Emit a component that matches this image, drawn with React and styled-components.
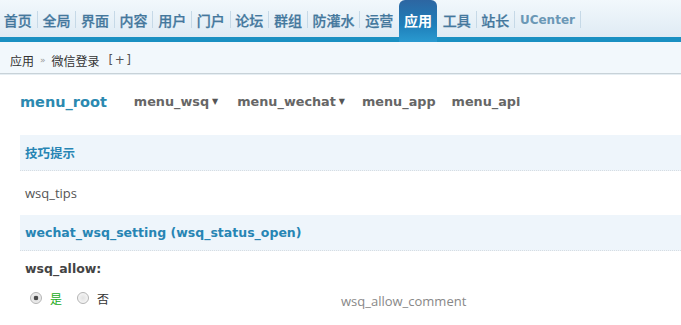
import React from "react";
import styled, { createGlobalStyle } from "styled-components";

const GlobalStyle = createGlobalStyle`
  html, body { margin: 0; padding: 0; background: #fff; }
  body {
    width: 681px;
    overflow: hidden;
    font-family: "Open Sans", "Noto Sans CJK SC", sans-serif;
    font-size: 12px;
    color: #333;
  }
`;

const CJK = `"Noto Sans CJK SC", sans-serif`;
const BOLD_LATIN = `"DejaVu Sans", "Noto Sans CJK SC", sans-serif`;

const Header = styled.div`
  height: 42px;
  background: linear-gradient(
    to bottom,
    #f2f8fc 0px,
    #dfebf4 37px,
    #1a90c2 37px,
    #1a90c2 42px
  );
`;

const Nav = styled.nav`
  display: flex;
  align-items: flex-start;
  height: 42px;
  margin-left: -1px;
`;

const NavItem = styled.a`
  display: flex;
  align-items: center;
  box-sizing: border-box;
  height: ${(p) => (p.$active ? "42px" : "37px")};
  padding: ${(p) => (p.$active ? "0 5px 3px 5px" : "3px 4.8px 0 4.8px")};
  font-family: ${(p) => (p.$latin ? BOLD_LATIN : CJK)};
  font-size: ${(p) => (p.$latin ? "12px" : "14px")};
  font-weight: ${(p) => (p.$active || p.$latin ? 700 : 500)};
  color: ${(p) => (p.$active ? "#fff" : p.$latin ? "#6b98b6" : "#44789d")};
  text-decoration: none;
  border-radius: ${(p) => (p.$active ? "6px 6px 0 0" : "0")};
  background: ${(p) =>
    p.$active
      ? "linear-gradient(to bottom, #2d66a2 0%, #1f7fba 60%, #2a9ad0 100%)"
      : "transparent"};
  -webkit-text-stroke: ${(p) => (p.$active || p.$latin ? "0" : "0.25px")};
  white-space: nowrap;
`;

const NavDivider = styled.span`
  align-self: center;
  width: 1px;
  height: 17px;
  margin-top: -4px;
  background: ${(p) => (p.$hidden ? "transparent" : "#c6d9e7")};
`;

const Crumbs = styled.div`
  display: flex;
  align-items: center;
  gap: 6px;
  box-sizing: border-box;
  height: 32px;
  padding: 5px 0 0 10px;
  background: #f2f8fc;
  border-bottom: 1px solid #c8d2d8;
  box-shadow: 0 1px 0 #e6eef3;
  font-family: ${CJK};
  font-size: 12px;
  color: #333;
`;

const CrumbSep = styled.span`
  font-family: "DejaVu Sans", sans-serif;
  font-size: 9px;
  color: #999;
`;

const CrumbAdd = styled.span`
  margin-left: 3px;
  letter-spacing: 1.5px;
  color: #555;
  font-family: "DejaVu Sans", sans-serif;
  font-size: 12px;
`;

const Main = styled.main`
  padding: 0 0 0 20px;
`;

const MenuBar = styled.div`
  display: flex;
  align-items: center;
  height: 55px;
  padding: 0 0 6px 0;
  font-family: ${BOLD_LATIN};
  font-weight: 700;
`;

const MenuRoot = styled.span`
  font-size: 14.5px;
  color: #2b89b0;
  margin-right: 27px;
`;

const MenuItem = styled.span`
  display: inline-flex;
  align-items: center;
  font-size: 12.8px;
  color: #666;
  margin-right: ${(p) => p.$gap}px;
`;

const Caret = styled.span`
  font-size: 8px;
  margin-left: 3px;
  color: #555;
`;

const SectionHead = styled.div`
  display: flex;
  align-items: center;
  box-sizing: border-box;
  height: 36px;
  padding-left: 5px;
  background: #eef5fb;
  border-bottom: 1px dotted #d7dde2;
  font-family: ${(p) => (p.$cjk ? CJK : BOLD_LATIN)};
  font-size: 12.5px;
  font-weight: 700;
  color: #2785b4;
`;

const TipRow = styled.div`
  display: flex;
  align-items: center;
  height: 44px;
  padding-left: 5px;
  font-size: 13px;
  color: #555;
`;

const FieldLabel = styled.div`
  display: flex;
  align-items: center;
  height: 34px;
  padding-left: 5px;
  font-family: ${BOLD_LATIN};
  font-size: 12.5px;
  font-weight: 700;
  color: #444;
`;

const FieldRow = styled.div`
  display: grid;
  grid-template-columns: 316px 1fr;
  align-items: center;
  height: 26px;
  padding-left: 5px;
`;

const RadioGroup = styled.div`
  display: flex;
  align-items: center;
  padding-left: 5px;
`;

const RadioLabel = styled.label`
  display: inline-flex;
  align-items: center;
  gap: 8px;
  margin-right: 15px;
  font-family: ${CJK};
  font-size: 12px;
  color: ${(p) => (p.$on ? "#22aa22" : "#333")};
`;

const Radio = styled.input.attrs({ type: "radio" })`
  appearance: none;
  -webkit-appearance: none;
  margin: 0;
  width: 12px;
  height: 12px;
  border-radius: 50%;
  border: 1px solid #b4b4b4;
  box-sizing: border-box;
  background: radial-gradient(circle at 50% 50%, #e2e2e2 0, #f4f4f4 70%);
  &:checked {
    background: radial-gradient(circle at 50% 50%, #4a4a4a 0 2px, #e4e4e4 2.6px, #f4f4f4 100%);
  }
`;

const Comment = styled.div`
  font-size: 13px;
  color: #888;
  padding-top: 6px;
`;

const navItems = [
  "首页", "全局", "界面", "内容", "用户", "门户", "论坛", "群组",
  "防灌水", "运营", "应用", "工具", "站长", "UCenter",
];

export default function App() {
  return (
    <>
      <GlobalStyle />
      <Header>
        <Nav>
          {navItems.map((t) => (
            <React.Fragment key={t}>
              <NavItem href="#" $active={t === "应用"} $latin={t === "UCenter"}>
                {t}
              </NavItem>
              <NavDivider $hidden={t === "运营" || t === "应用"} />
            </React.Fragment>
          ))}
        </Nav>
      </Header>
      <Crumbs>
        <span>应用</span>
        <CrumbSep>»</CrumbSep>
        <span>微信登录</span>
        <CrumbAdd>[+]</CrumbAdd>
      </Crumbs>
      <Main>
        <MenuBar>
          <MenuRoot>menu_root</MenuRoot>
          <MenuItem $gap={19}>menu_wsq<Caret>▼</Caret></MenuItem>
          <MenuItem $gap={17}>menu_wechat<Caret>▼</Caret></MenuItem>
          <MenuItem $gap={16}>menu_app</MenuItem>
          <MenuItem $gap={0}>menu_api</MenuItem>
        </MenuBar>
        <SectionHead $cjk>技巧提示</SectionHead>
        <TipRow>wsq_tips</TipRow>
        <SectionHead>wechat_wsq_setting (wsq_status_open)</SectionHead>
        <FieldLabel>wsq_allow:</FieldLabel>
        <FieldRow>
          <RadioGroup>
            <RadioLabel $on>
              <Radio name="wsq_allow" defaultChecked />是
            </RadioLabel>
            <RadioLabel>
              <Radio name="wsq_allow" />否
            </RadioLabel>
          </RadioGroup>
          <Comment>wsq_allow_comment</Comment>
        </FieldRow>
      </Main>
    </>
  );
}
